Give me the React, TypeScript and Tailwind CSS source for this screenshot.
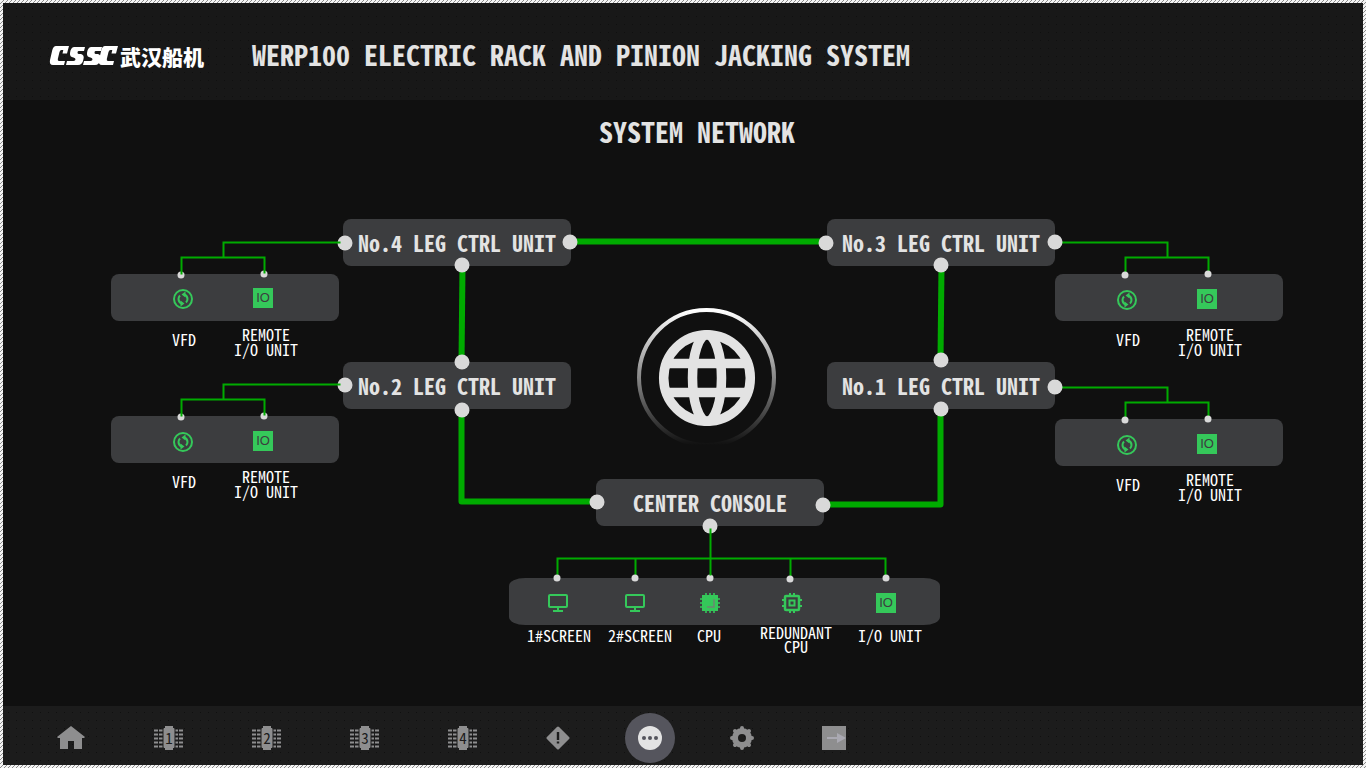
import React from "react";

const hw = "font-['Noto_Sans_CJK_SC','Liberation_Mono',monospace] [font-feature-settings:'hwid']";
const hatch = "bg-[linear-gradient(135deg,#f4f4f4_0_44%,#8c8c8c_44%_56%,#f4f4f4_56%)] bg-[size:4px_4px]";
const dots = "bg-[conic-gradient(from_270deg_at_1px_1px,#101010_90deg,transparent_0)] bg-[size:8px_8px]";

function Logo() {
  return (
    <div className="flex items-center gap-1 text-white">
      <svg className="overflow-visible" width="67" height="20" viewBox="0 0 67 20" aria-label="CSSC" fill="#fff">
        <path d="M7 0H20L18 7.500H13.500L14.300 4H12.500Q11 4 10.500 6L8.800 13Q8.500 15 10 15H16L15 19H4Q0 19 1 14L3.300 4Q4.500 0 7 0Z" />
        <path d="M25 1H36L35 5H29.500Q28.500 5 28.500 6.500Q28.500 8 30 8H32Q35.500 9 34.500 13Q33.500 19 29 19H17L18 15H24.500Q26.500 15 26.500 13.300Q26.500 12 24.500 11.500Q20.500 11 21 7Q21.700 1.500 25 1Z" />
        <path d="M42 1H53L52 5H46.500Q45.500 5 45.500 6.500Q45.500 8 47 8H49Q52.500 9 51.500 13Q50.500 19 46 19H34L35 15H41.500Q43.500 15 43.500 13.300Q43.500 12 41.500 11.500Q37.500 11 38 7Q38.700 1.500 42 1Z" />
        <path d="M56 0H69L67 7.500H62.500L63.300 4H61.500Q60 4 59.500 6L57.800 13Q57.500 15 59 15H65L64 19H53Q49 19 50 14L52.300 4Q53.500 0 56 0Z" />
      </svg>
      <span className="font-['Noto_Sans_CJK_SC',sans-serif] text-[21px] leading-7 font-black">武汉船机</span>
    </div>
  );
}

function Vfd() {
  return (
    <svg className="mt-px" width="20" height="20" viewBox="0 0 20 20" fill="none" stroke="#35c85a">
      <circle cx="10" cy="10" r="9" strokeWidth="2" />
      <path d="M8.500 14.500Q5.500 13 5.500 10Q5.500 8 7 6.500M11.500 5.500Q14.500 7 14.500 10Q14.500 12 13 13.500" strokeWidth="2" />
      <path d="M12.500 2.500V8.500L8.500 5.500ZM7.500 11.500V17.500L11.500 14.500Z" fill="#35c85a" stroke="none" />
    </svg>
  );
}

function Io() {
  return (
    <span className="flex size-5 items-center justify-center bg-[#35c85a] font-['Liberation_Sans',sans-serif] text-[13px] leading-5 text-[#3c3d3f]">IO</span>
  );
}

function Screen() {
  return (
    <svg width="20" height="20" viewBox="0 0 20 20" fill="none" stroke="#35c85a" strokeWidth="2">
      <rect x="1" y="2" width="18" height="12" rx="1" />
      <path d="M10 14V18M5 18H15" />
    </svg>
  );
}

function Cpu() {
  return (
    <svg width="20" height="20" viewBox="0 0 20 20" fill="#35c85a">
      <path d="M2 2H18V18H2Z" />
      <path d="M6 0V20M10 0V20M14 0V20M0 6H20M0 10H20M0 14H20" stroke="#35c85a" strokeWidth="1.600" />
      <path d="M14 6V14H7" fill="none" stroke="#6d8571" strokeWidth="1.500" />
    </svg>
  );
}

function RedundantCpu() {
  return (
    <svg width="20" height="20" viewBox="0 0 20 20" fill="none" stroke="#35c85a">
      <rect x="3" y="3" width="14" height="14" rx="1" strokeWidth="2.500" />
      <rect x="7.500" y="7.500" width="5" height="5" strokeWidth="2" />
      <path d="M8 0V3M12 0V3M8 17V20M12 17V20M0 7H3M0 13H3M17 7H20M17 13H20" strokeWidth="2" />
    </svg>
  );
}

function Node({ label, at }: { label: string; at: string }) {
  return (
    <div className={`absolute flex h-[47px] w-[228px] items-center justify-center rounded-lg bg-[#3c3d3f] pb-0.5 text-[22px] leading-7 font-bold whitespace-nowrap text-[#e3e3e3] ${at}`}>
      {label}
    </div>
  );
}

function Unit({ at, iconTop }: { at: string; iconTop: string }) {
  return (
    <div className={`absolute w-[228px] ${at}`}>
      <div className={`flex h-[47px] gap-[60px] rounded-lg bg-[#3c3d3f] pl-[62px] ${iconTop}`}>
        <Vfd />
        <Io />
      </div>
      <div className="mt-[6px] flex items-start gap-2 pl-[33px] text-center text-base text-white">
        <span className="w-20 leading-6">VFD</span>
        <span className="w-[68px] leading-[15px]">REMOTE I/O UNIT</span>
      </div>
    </div>
  );
}

const consoleItems = [
  { label: "1#SCREEN", icon: <Screen />, at: "left-[437px]", labelAt: "left-[408px] top-[404px]" },
  { label: "2#SCREEN", icon: <Screen />, at: "left-[514px]", labelAt: "left-[489px] top-[404px]" },
  { label: "CPU", icon: <Cpu />, at: "left-[589px]", labelAt: "left-[558px] top-[404px]" },
  { label: "REDUNDANT CPU", icon: <RedundantCpu />, at: "left-[671px]", labelAt: "left-[645px] top-[408px]" },
  { label: "I/O UNIT", icon: <Io />, at: "left-[765px]", labelAt: "left-[739px] top-[404px]" },
];

const trunk = ["M459 22H715", "M351 46L350 143", "M830 46L829 141", "M350 191V282H486", "M829 190V285H712"];
const branchesBelow = [
  "M944 23H1056V38M1014 54V38H1097V54",
  "M944 168H1056V183M1014 199V183H1097V199",
  "M446 359V339H774V359M524 339V359M679 339V359",
];
const branchesAbove = [
  "M229 23H112V38M70 55V38H153V54",
  "M229 165H112V180M70 197V180H153V196",
  "M599 309V356",
];
const ports = [[234, 24], [459, 23], [351, 46], [351, 143], [234, 166], [351, 191], [715, 24], [944, 23], [830, 46], [830, 141], [944, 168], [830, 190], [486, 283], [712, 286], [599, 307]];
const pins = [[70, 56], [153, 55], [70, 198], [153, 197], [1014, 56], [1097, 55], [1014, 201], [1097, 200], [446, 359], [524, 359], [599, 359], [679, 360], [775, 359]];

function Diagram() {
  return (
    <div className="relative h-[440px] w-[1172px] shrink-0">
      <Node label="No.4 LEG CTRL UNIT" at="left-[232px] top-0" />
      <Node label="No.3 LEG CTRL UNIT" at="left-[716px] top-0" />
      <Node label="No.2 LEG CTRL UNIT" at="left-[232px] top-[143px]" />
      <Node label="No.1 LEG CTRL UNIT" at="left-[716px] top-[143px]" />
      <Node label="CENTER CONSOLE" at="left-[485px] top-[260px]" />
      <Unit at="left-0 top-[55px]" iconTop="pt-[14px]" />
      <Unit at="left-0 top-[197px]" iconTop="pt-[15px]" />
      <Unit at="left-[944px] top-[55px]" iconTop="pt-[15px]" />
      <Unit at="left-[944px] top-[200px]" iconTop="pt-[15px]" />
      <div className="absolute left-[398px] top-[359px] h-[47px] w-[431px] rounded-[16px/8px] bg-[#3c3d3f]" />
      {consoleItems.map((item) => (
        <React.Fragment key={item.label}>
          <span className={`absolute top-[374px] ${item.at}`}>{item.icon}</span>
          <span className={`absolute flex h-6 w-20 items-center justify-center text-center text-base leading-[14px] text-white ${item.labelAt}`}>{item.label}</span>
        </React.Fragment>
      ))}
      <svg className="absolute left-0 top-0" width="1172" height="440" viewBox="0 0 1172 440" fill="none">
        <defs>
          <linearGradient id="ring" x1="0" y1="0" x2="0" y2="1">
            <stop offset="0" stopColor="#fff" />
            <stop offset="1" stopColor="#fff" stopOpacity="0" />
          </linearGradient>
        </defs>
        <g transform="translate(0.5 0.5)" stroke="#00ab00">
          {trunk.map((d) => <path key={d} d={d} strokeWidth="6" strokeLinejoin="round" />)}
          {branchesBelow.map((d) => <path key={d} d={d} strokeWidth="2" />)}
        </g>
        {ports.map(([x, y]) => <circle key={`${x}-${y}`} cx={x} cy={y} r="7.500" fill="#d9d9d9" />)}
        {pins.map(([x, y]) => <circle key={`${x}-${y}`} cx={x} cy={y} r="3.500" fill="#d9d9d9" />)}
        <g transform="translate(0.5 0.5)" stroke="#00ab00" strokeWidth="2">
          {branchesAbove.map((d) => <path key={d} d={d} />)}
        </g>
        <circle cx="595.500" cy="158.500" r="67.500" stroke="url(#ring)" strokeWidth="4" />
        <g stroke="#e3e3e3" strokeWidth="9.500">
          <circle cx="596" cy="159" r="43.300" />
          <ellipse cx="596" cy="159" rx="14.500" ry="43.300" />
          <path d="M554 144.500H638M554 173.500H638" />
        </g>
      </svg>
    </div>
  );
}

function Leg({ n }: { n: number }) {
  return (
    <svg width="30" height="24" viewBox="0 0 30 24" fill="#8e8e8f">
      <path d="M0 4.500H30M0 8.500H30M0 12.500H30M0 16.500H30M0 20.500H30" stroke="#8e8e8f" strokeWidth="2" strokeDasharray="4 1" />
      <rect x="9" y="2" width="12" height="20" stroke="#1c1c1c" strokeWidth="1" />
      <path d="M11 0H19V2H20V22H19V24H11V22H10V2H11Z" />
      <text x="15" y="18" textAnchor="middle" fontSize="15" fill="#1c1c1c">{n}</text>
    </svg>
  );
}

const nav = [
  { name: "Home", w: "ml-[43px] w-[50px]", icon: <svg width="28" height="24" viewBox="0 0 28 24" fill="#8e8e8f"><path d="M14 0L28 11L27 12H25V23H17V15H11V23H3V12H1L0 11Z" /></svg> },
  { name: "Leg 1", w: "ml-12 w-[50px]", icon: <Leg n={1} /> },
  { name: "Leg 2", w: "ml-12 w-[50px]", icon: <Leg n={2} /> },
  { name: "Leg 3", w: "ml-12 w-[50px]", icon: <Leg n={3} /> },
  { name: "Leg 4", w: "ml-12 w-[50px]", icon: <Leg n={4} /> },
  { name: "Alarms", w: "ml-[45px] w-[50px]", icon: <svg width="24" height="24" viewBox="0 0 24 24"><path d="M12 2L22 12L12 22L2 12Z" fill="#8e8e8f" stroke="#8e8e8f" strokeWidth="3" strokeLinejoin="round" /><path d="M12 6V14M12 15.500V17.500" stroke="#1c1c1c" strokeWidth="2.400" /></svg> },
  { name: "System network", w: "ml-[42px] w-[50px] bg-[#55555d]", icon: <svg width="24" height="24" viewBox="0 0 24 24" fill="#55555d"><circle cx="12" cy="12" r="12" fill="#e3e3e3" /><circle cx="6" cy="12" r="2" /><circle cx="12" cy="12" r="2" /><circle cx="18" cy="12" r="2" /></svg> },
  { name: "Settings", w: "ml-[42px] w-[50px]", icon: <svg width="24" height="24" viewBox="0 0 24 24" fill="none" stroke="#8e8e8f"><circle cx="12" cy="12" r="7" strokeWidth="6" /><path d="M12 2V4M12 20V22M2 12H4M20 12H22M5 5L6 6M18 18L19 19M5 19L6 18M18 6L19 5" strokeWidth="4" strokeLinecap="round" /></svg> },
  { name: "Exit", w: "ml-[42px] w-[50px]", icon: <svg width="24" height="24" viewBox="0 0 24 24"><path fill="#8e8e8f" d="M0 0H24V24H0Z" /><path d="M5 11H15V7L24 12L15 17V13H5Z" fill="#aaa9b2" /></svg> },
];

export default function App() {
  return (
    <div className={`flex min-h-screen p-[3px] ${hatch}`}>
      <div className={`flex min-w-0 flex-1 flex-col bg-[#101010] ${hw}`}>
        <header className={`flex h-[97px] items-center gap-12 bg-[#181818] bg-[position:5px_5px] pt-2 pl-[46px] ${dots}`}>
          <Logo />
          <h1 className="pb-1 text-[28px] leading-8 font-bold whitespace-nowrap text-[#e3e3e3]">WERP100 ELECTRIC RACK AND PINION JACKING SYSTEM</h1>
        </header>
        <main className="flex flex-1 flex-col items-center gap-[72px] pt-[15px] pl-7">
          <h2 className="text-[28px] leading-8 font-bold whitespace-nowrap text-[#e3e3e3]">SYSTEM NETWORK</h2>
          <Diagram />
        </main>
        <nav className={`flex h-[59px] items-center bg-[#1c1c1c] bg-[position:5px_6px] pt-1 ${dots}`}>
          {nav.map((item) => (
            <button key={item.name} type="button" aria-label={item.name} className={`flex h-[50px] shrink-0 items-center justify-center rounded-full ${item.w}`}>
              {item.icon}
            </button>
          ))}
        </nav>
      </div>
    </div>
  );
}
